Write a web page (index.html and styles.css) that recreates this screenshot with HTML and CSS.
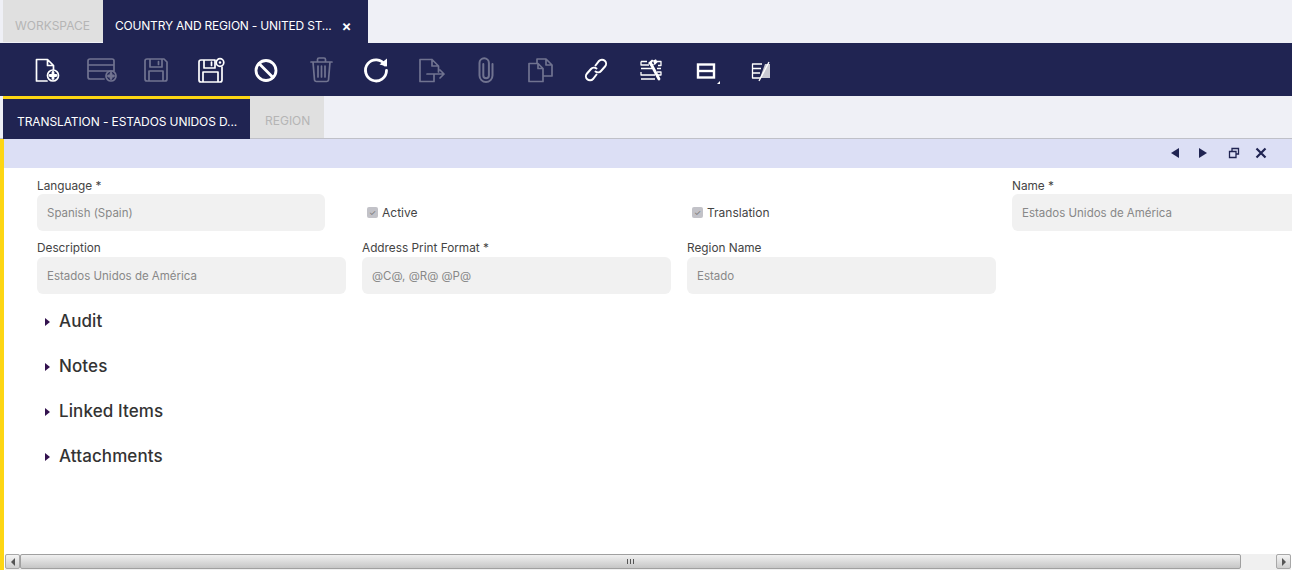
FILE: index.html
```html
<!DOCTYPE html>
<html lang="en">
<head>
<meta charset="utf-8">
<title>Country and Region</title>
<link rel="stylesheet" href="styles.css">
</head>
<body>
<div class="app">
  <nav class="main-tabs">
    <div class="tab tab-off workspace">WORKSPACE</div>
    <div class="tab tab-on country"><span>COUNTRY AND REGION - UNITED ST...</span><span class="close">×</span></div>
  </nav>
  <div class="toolbar">
    <button class="tool"><svg viewBox="0 0 30 30"><path d="M5.500 4.500h11l6 6v4M16.500 4.500v6h6M16 26H5.500V4.500"/><circle cx="22" cy="20.500" r="5.500"/><path class="thick" d="M22 17.500v6M19 20.500h6"/></svg></button>
    <button class="tool off"><svg viewBox="0 0 30 30"><path d="M18 24H4a2 2 0 0 1-2-2V6a2 2 0 0 1 2-2h22a2 2 0 0 1 2 2v10M2 10h26M2 16h26"/><circle cx="25" cy="21" r="5"/><path class="thick" d="M25 18.500v5M22.500 21h5"/></svg></button>
    <button class="tool off"><svg viewBox="0 0 30 30"><path d="M6 4h17l3 3v17a2 2 0 0 1-2 2H6a2 2 0 0 1-2-2V6a2 2 0 0 1 2-2zM9 4v8h12V4M17.500 6.500v3M8 26V16h14v10"/></svg></button>
    <button class="tool"><svg viewBox="0 0 30 30"><path d="M19 5H5a2 2 0 0 0-2 2v18a2 2 0 0 0 2 2h19a2 2 0 0 0 2-2V12M8 5v8h11V5M15.500 7v3.500M7 27V17h15v10"/><circle cx="24" cy="7.500" r="3.800"/><circle class="dot" cx="24" cy="7.500" r="1.200"/></svg></button>
    <button class="tool"><svg viewBox="0 0 30 30"><circle class="thick" cx="15" cy="15.500" r="10"/><path class="thick" d="M8 8.500l14 14"/></svg></button>
    <button class="tool off"><svg viewBox="0 0 30 30"><path d="M5 7h21M11.500 7V4.500a1.500 1.500 0 0 1 1.500-1.500h5a1.500 1.500 0 0 1 1.500 1.500V7M7 7l1.500 18a2 2 0 0 0 2 1.500h10a2 2 0 0 0 2-1.500L24 7M12 11v11M15.500 11v11M19 11v11"/></svg></button>
    <button class="tool"><svg viewBox="0 0 30 30"><path class="thick" d="M24 10a10.500 10.500 0 1 0 1.500 5.500"/><path class="fill" d="M18.500 9.500L26 3.500v8z"/></svg></button>
    <button class="tool off"><svg viewBox="0 0 30 30"><path d="M16 4.500H4v22h14v-7M16 4.500l6.500 6.500v6M16 4.500V11h6.500M11 19h17M24 15l4 4-4 4"/></svg></button>
    <button class="tool off"><svg viewBox="0 0 30 30"><path class="mid" d="M21.500 9v11.500a6.500 6.500 0 0 1-13 0V8a4.700 4.700 0 0 1 9.400 0v12.500a2.800 2.800 0 0 1-5.600 0V9"/></svg></button>
    <button class="tool off"><svg viewBox="0 0 30 30"><path d="M11 8V4h9l6 6v11H17M20 4v6h6M3 8.500h9l5 5v13H3zM12 8.500v5h5"/></svg></button>
    <button class="tool"><svg viewBox="0 0 30 30"><path class="mid" d="M14.500 10.500l3.500-4.500a4 4 0 0 1 6 5.500l-4 4.500a4 4 0 0 1-5.500.500"/><path class="mid" d="M15.500 19.500l-3.500 4.500a4 4 0 0 1-6-5.500l4-4.500a4 4 0 0 1 5.500-.500"/></svg></button>
    <button class="tool"><svg viewBox="0 0 30 30"><path class="thin" d="M5 6.500h6M5 6.500v3.500h8M19 6.500h6v4h-3M5 13.500h11M21 13.500h4M5 17v3h14M21 17h4v3h-3M5 24h14"/><path class="thick" d="M15 9l8 15"/><path class="fill" d="M12 8l4-3.500 1.500 1-2 3 2.500 1-2 2.500zM17 5.500l3-1.200 1.500 3-3 3z"/></svg></button>
    <button class="tool"><svg viewBox="0 0 30 30"><rect class="heavy" x="7" y="9.500" width="16" height="13"/><path class="heavy" d="M7 16h16"/><path class="fill" d="M29 26v3h-3z"/></svg></button>
    <button class="tool"><svg viewBox="0 0 30 30"><path class="thin" d="M16 9H6.500v14H15M6.500 13.500H15M6.500 18H14"/><path class="fill shade" d="M19 9h5v14h-10z"/><path class="thin" d="M13 26l10-19"/></svg></button>
  </div>
  <nav class="sub-tabs">
    <div class="tab tab-on translation">TRANSLATION - ESTADOS UNIDOS D...</div>
    <div class="tab tab-off region">REGION</div>
  </nav>
  <main class="content">
    <div class="status-bar">
      <span class="ctl"><svg viewBox="0 0 12 12"><path d="M10 1v10L2 6z"/></svg></span>
      <span class="ctl"><svg viewBox="0 0 12 12"><path d="M2 1v10l8-5z"/></svg></span>
      <span class="ctl gap"><svg viewBox="0 0 12 12"><path class="line" d="M4 4V1.500h6.500V7H8M1.500 4.500H8v6H1.500z"/></svg></span>
      <span class="ctl"><svg viewBox="0 0 12 12"><path class="line bold" d="M1.500 1.500l9 9M10.500 1.500l-9 9"/></svg></span>
    </div>
    <form class="form">
      <div class="field"><label>Language *</label><div class="input short">Spanish (Spain)</div></div>
      <div class="check"><span class="box">✓</span><span>Active</span></div>
      <div class="check"><span class="box">✓</span><span>Translation</span></div>
      <div class="field"><label>Name *</label><div class="input">Estados Unidos de América</div></div>
      <div class="field lower"><label>Description</label><div class="input">Estados Unidos de América</div></div>
      <div class="field lower"><label>Address Print Format *</label><div class="input">@C@, @R@ @P@</div></div>
      <div class="field lower"><label>Region Name</label><div class="input">Estado</div></div>
    </form>
    <section class="sections">
      <div class="section"><i class="arrow"></i>Audit</div>
      <div class="section"><i class="arrow"></i>Notes</div>
      <div class="section"><i class="arrow"></i>Linked Items</div>
      <div class="section"><i class="arrow"></i>Attachments</div>
    </section>
    <div class="scrollbar">
      <span class="sb-btn"><i class="sb-left"></i></span>
      <span class="sb-thumb"><i class="grip"></i></span>
      <span class="sb-track"></span>
      <span class="sb-btn"><i class="sb-right"></i></span>
    </div>
  </main>
</div>
</body>
</html>
```
FILE: styles.css
```css
* { box-sizing: border-box; }
html, body { margin: 0; height: 100%; overflow: hidden; }
body { background: #fff; font-family: "Inter", "Open Sans", sans-serif; color: #333; font-variant-ligatures: no-contextual; }
.app { width: 1292px; height: 570px; display: flex; flex-direction: column; overflow: hidden; }

.main-tabs { height: 43px; background: #eff0f6; display: flex; padding-left: 3px; flex: none; }
.tab { font-size: 12px; display: flex; align-items: center; white-space: nowrap; }
.tab-off { background: #e0e0e0; color: #b5b5b5; }
.tab-on { background: #202452; color: #fff; }
.workspace { width: 100px; padding: 8px 0 0 12px; height: 42px; }
.country { width: 265px; padding: 8px 0 0 12px; letter-spacing: -.2px; }
.close { font-size: 15px; margin-left: 10px; font-weight: 600; line-height: 1; letter-spacing: 0; }

.toolbar { height: 53px; background: #202452; display: flex; align-items: center; padding-left: 18px; flex: none; }
.tool { width: 55px; height: 30px; padding: 0; border: 0; background: none; display: flex; align-items: center; justify-content: center; }
.tool svg { width: 30px; height: 30px; fill: none; stroke: #fff; stroke-width: 1.7; stroke-linejoin: round; stroke-linecap: round; overflow: visible; }
.tool.off svg { opacity: .36; }
.tool .thick { stroke-width: 2.8; }
.tool .mid { stroke-width: 2; stroke-linejoin: miter; }
.tool .heavy { stroke-width: 2.4; stroke-linejoin: miter; stroke-linecap: butt; }
.tool .thin { stroke-width: 1.3; stroke-linecap: butt; }
.tool .fill { fill: #fff; stroke: none; }
.tool .dot { fill: #fff; stroke: none; }
.tool .shade { fill: #c9c9d2; }

.sub-tabs { height: 43px; background: #eff0f6; display: flex; padding-left: 3px; flex: none; border-bottom: 1px solid #bfc0c8; }
.translation { width: 247px; height: 43px; padding: 5px 0 0 14px; border-top: 3px solid #fdd614; letter-spacing: -.1px; }
.region { width: 74px; padding: 7px 0 0 15px; height: 42px; }

.content { flex: 1; border-left: 4px solid #fdd614; position: relative; min-height: 0; display: flex; flex-direction: column; overflow: hidden; }
.status-bar { height: 29px; background: #dcdff5; display: flex; align-items: center; justify-content: flex-end; padding: 0 17px 1px 0; flex: none; }
.ctl { width: 28px; height: 12px; display: flex; justify-content: center; }
.ctl.gap { margin-left: 4px; width: 26px; }
.ctl svg { width: 12px; height: 12px; fill: #202452; overflow: visible; }
.ctl .line { fill: none; stroke: #202452; stroke-width: 1.3; }
.ctl .bold { stroke-width: 2.2; }

.form { display: grid; grid-template-columns: repeat(4, 309px); column-gap: 16px; row-gap: 9px; padding: 10px 0 0 33px; flex: none; width: 1400px; }
.field { display: flex; flex-direction: column; }
.field label { font-size: 11.800px; line-height: 16px; color: #444; }
.lower label { line-height: 17px; }
.input { height: 37px; background: #f1f1f1; border-radius: 6px; font-size: 11.500px; color: #888; display: flex; align-items: center; padding-left: 10px; }
.input.short { width: 288px; }
.check { display: flex; align-items: center; gap: 4px; font-size: 12px; color: #444; padding: 16px 0 0 5px; height: 53px; }
.box { width: 11px; height: 11px; background: #c2c2c8; border-radius: 2px; font-size: 8px; color: #777; display: flex; align-items: center; justify-content: center; line-height: 1; }

.sections { padding: 4px 0 0 33px; }
.section { height: 45px; display: flex; align-items: center; font-size: 17px; font-weight: 500; color: #333; letter-spacing: .1px; }
.arrow { width: 0; height: 0; border-left: 5px solid #33124f; border-top: 4px solid transparent; border-bottom: 4px solid transparent; margin: 2px 9px 0 8px; }

.scrollbar { position: absolute; left: 1px; right: 1px; bottom: 0; height: 16px; display: flex; background: #f0f0f0; }
.sb-btn { width: 15px; height: 15px; flex: none; border: 1px solid #a8a8a8; border-radius: 2px; background: linear-gradient(#f4f4f4, #cfcfcf); display: flex; align-items: center; justify-content: center; }
.sb-thumb { width: 1221px; flex: none; height: 15px; border: 1px solid #a0a0a0; border-radius: 2px; background: linear-gradient(#f0f0f0, #c6c6c6); display: flex; align-items: center; justify-content: center; }
.sb-track { flex: 1; }
.grip { width: 7px; height: 5px; background: repeating-linear-gradient(90deg, #555 0 1px, transparent 1px 3px); }
.sb-left { border-right: 4px solid #555; border-top: 4px solid transparent; border-bottom: 4px solid transparent; }
.sb-right { border-left: 4px solid #555; border-top: 4px solid transparent; border-bottom: 4px solid transparent; }
```
